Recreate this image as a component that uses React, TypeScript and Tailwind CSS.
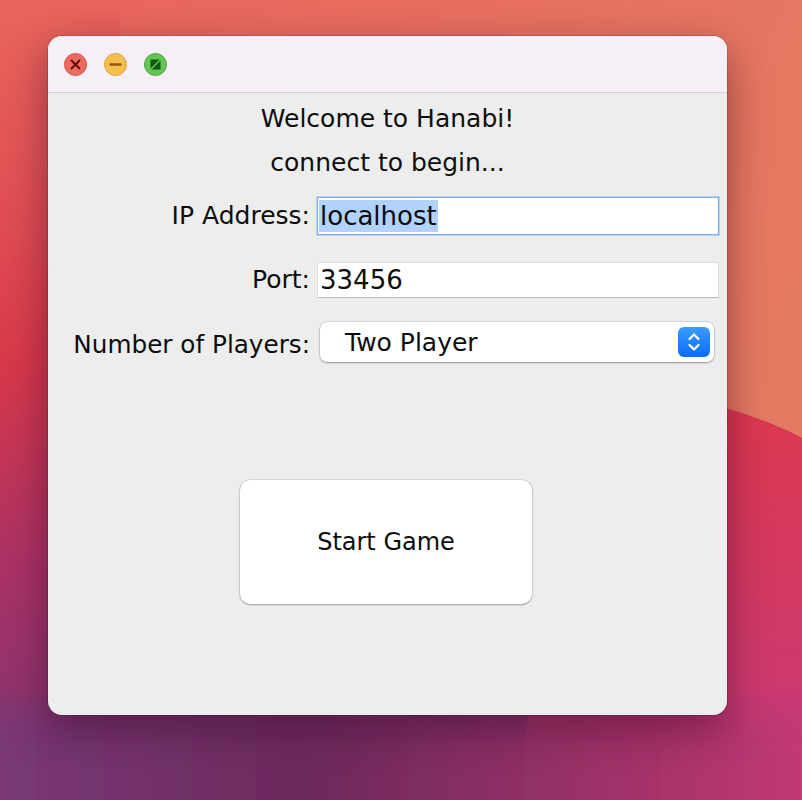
import React from "react";

function Wallpaper() {
  return (
    <svg className="absolute inset-0" width="802" height="800" viewBox="0 0 802 800">
      <defs>
        <linearGradient id="base" x1="0" y1="0" x2="0.15" y2="1">
          <stop offset="0" stopColor="#e9665d" />
          <stop offset="0.3" stopColor="#df4a52" />
          <stop offset="0.45" stopColor="#d7384b" />
          <stop offset="0.7" stopColor="#a93266" />
          <stop offset="1" stopColor="#783674" />
        </linearGradient>
        <linearGradient id="orange" gradientUnits="userSpaceOnUse" x1="120" y1="0" x2="802" y2="300">
          <stop offset="0" stopColor="#e9665d" />
          <stop offset="1" stopColor="#e57a62" />
        </linearGradient>
        <linearGradient id="red" x1="0" y1="0" x2="0" y2="1">
          <stop offset="0" stopColor="#e0384b" />
          <stop offset="0.5" stopColor="#d23862" />
          <stop offset="1" stopColor="#c63a7a" />
        </linearGradient>
        <linearGradient id="bottom" x1="0" y1="0" x2="1" y2="0">
          <stop offset="0" stopColor="#7a3a79" />
          <stop offset="0.4" stopColor="#6c2a5c" />
          <stop offset="0.75" stopColor="#a03268" />
          <stop offset="1" stopColor="#c83a78" />
        </linearGradient>
        <filter id="soft">
          <feGaussianBlur stdDeviation="22" />
        </filter>
      </defs>
      <rect width="802" height="800" fill="url(#base)" />
      <path d="M120 0 L802 0 L802 438 Q730 400 560 370 L120 60 Z" fill="url(#orange)" />
      <path d="M560 370 Q730 400 802 438 L802 800 L520 800 Z" fill="url(#red)" />
      <rect x="-40" y="710" width="880" height="160" fill="url(#bottom)" filter="url(#soft)" />
    </svg>
  );
}

function TrafficLights() {
  return (
    <div className="flex items-center gap-[17px] pl-[16px]">
      <svg width="23" height="23" viewBox="0 0 23 23">
        <circle cx="11.5" cy="11.5" r="11" fill="#ec6a5f" stroke="#d1554b" />
        <path d="M7.5 7.5 L15.5 15.5 M15.5 7.5 L7.5 15.5" stroke="#5a0c08" strokeWidth="1.8" strokeLinecap="round" />
      </svg>
      <svg width="23" height="23" viewBox="0 0 23 23">
        <circle cx="11.5" cy="11.5" r="11" fill="#f5bf4f" stroke="#d9a23b" />
        <path d="M6.5 11.5 L16.5 11.5" stroke="#8f5a10" strokeWidth="2.4" strokeLinecap="round" />
      </svg>
      <svg width="23" height="23" viewBox="0 0 23 23">
        <circle cx="11.5" cy="11.5" r="11" fill="#62c554" stroke="#4da63f" />
        <path d="M6.5 6.5 L15.5 6.5 L6.5 15.5 Z M16.5 7.5 L16.5 16.5 L7.5 16.5 Z" fill="#0e5a10" />
      </svg>
    </div>
  );
}

export default function App() {
  return (
    <div className="relative w-[802px] h-[800px] overflow-hidden font-['DejaVu_Sans',sans-serif] text-[#0d0d0d]">
      <Wallpaper />
      <div className="relative pt-[36px] pl-[48px]">
        <div className="w-[679px] h-[679px] rounded-[14px] overflow-hidden bg-[#ededed] flex flex-col shadow-[0_14px_40px_rgba(40,0,30,0.45),0_0_0_1px_rgba(0,0,0,0.12)]">
          {/* Title bar */}
          <div className="h-[57px] shrink-0 flex items-center bg-[#f7eff7] border-b border-[#d3cfd3]">
            <TrafficLights />
          </div>

          {/* Heading */}
          <div className="flex flex-col items-center pt-[11px] text-[25px]">
            <div className="h-[30px] leading-[30px]">Welcome to Hanabi!</div>
            <div className="mt-[14px] h-[30px] leading-[30px]">connect to begin...</div>
          </div>

          {/* Form */}
          <div className="grid grid-cols-[269px_402px] mt-[19px] text-[25px]">
            <div className="h-[38px] flex items-center justify-end pr-[7px]">IP Address:</div>
            <div className="h-[38px] bg-white border border-[#80b0ea] shadow-[0_0_0_1px_#b4d1f6] flex items-center pl-[1px] text-[26px]">
              <span className="bg-[#b0d2fb] h-[32px] leading-[32px] px-[1px]">localhost</span>
            </div>

            <div className="h-[36px] mt-[27px] flex items-center justify-end pr-[7px]">Port:</div>
            <div className="h-[36px] mt-[27px] bg-white border border-[#dcdcdc] border-b-[#b8b8b8] flex items-center pl-[2px] text-[26px]">
              33456
            </div>

            <div className="h-[40px] mt-[24px] flex items-center justify-end pr-[7px] pt-[5px]">
              <span className="text-[24.7px]">Number of Players:</span>
            </div>
            <div className="h-[40px] mt-[24px] ml-[3px] mr-[5px] bg-white rounded-[7px] shadow-[0_0_0_0.5px_rgba(0,0,0,0.18),0_1px_2px_rgba(0,0,0,0.3)] flex items-center justify-between pl-[25px] pr-[4px]">
              <span className="pt-[2px]">Two Player</span>
              <div className="w-[32px] h-[30px] rounded-[6px] bg-[linear-gradient(#3a9bff,#0a6ef6)] flex items-center justify-center">
                <svg width="16" height="22" viewBox="0 0 16 22">
                  <path d="M3.5 8 L8 3.5 L12.5 8 M3.5 14 L8 18.5 L12.5 14" fill="none" stroke="#fff" strokeWidth="2.2" strokeLinecap="round" strokeLinejoin="round" />
                </svg>
              </div>
            </div>
          </div>

          {/* Start button */}
          <div className="mt-[118px] ml-[192px] w-[292px] h-[124px] bg-white rounded-[10px] shadow-[0_0_0_0.5px_rgba(0,0,0,0.15),0_1px_2px_rgba(0,0,0,0.3)] flex items-center justify-center text-[24px]">
            Start Game
          </div>
        </div>
      </div>
    </div>
  );
}
